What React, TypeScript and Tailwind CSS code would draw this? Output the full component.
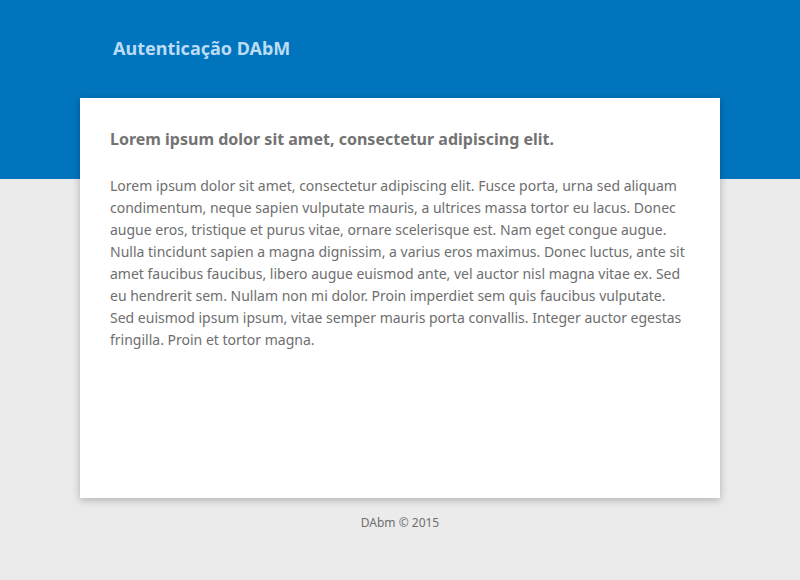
import React from "react";

const body =
  "Lorem ipsum dolor sit amet, consectetur adipiscing elit. Fusce porta, urna sed aliquam condimentum, neque sapien vulputate mauris, a ultrices massa tortor eu lacus. Donec augue eros, tristique et purus vitae, ornare scelerisque est. Nam eget congue augue. Nulla tincidunt sapien a magna dignissim, a varius eros maximus. Donec luctus, ante sit amet faucibus faucibus, libero augue euismod ante, vel auctor nisl magna vitae ex. Sed eu hendrerit sem. Nullam non mi dolor. Proin imperdiet sem quis faucibus vulputate. Sed euismod ipsum ipsum, vitae semper mauris porta convallis. Integer auctor egestas fringilla. Proin et tortor magna.";

export default function App() {
  return (
    <div
      className="min-h-[580px] w-full bg-[linear-gradient(to_bottom,#0075bd_0px,#0075bd_179px,#ebebeb_179px,#ebebeb_100%)] pb-[40px]"
      style={{ fontFamily: '"Noto Sans", "Open Sans", sans-serif' }}
    >
      <div className="mx-auto w-[640px]">
        <header className="pt-[36px] pl-[33px]">
          <h1 className="text-[18px] font-bold leading-[24px] text-[#bcdcf5]">
            Autenticação DAbM
          </h1>
        </header>

        <main className="mt-[38px] h-[400px] bg-white px-[30px] pt-[30px] shadow-[0_2px_8px_rgba(0,0,0,0.26)]">
          <h2 className="text-[16px] font-bold leading-[22px] text-[#737373]">
            Lorem ipsum dolor sit amet, consectetur adipiscing elit.
          </h2>
          <p className="mt-[25px] text-[14px] leading-[22px] text-[#6e6e6e]">
            {body}
          </p>
        </main>

        <footer className="mt-[16px] text-center text-[12px] leading-[18px] text-[#6e6e6e]">
          DAbm © 2015
        </footer>
      </div>
    </div>
  );
}
